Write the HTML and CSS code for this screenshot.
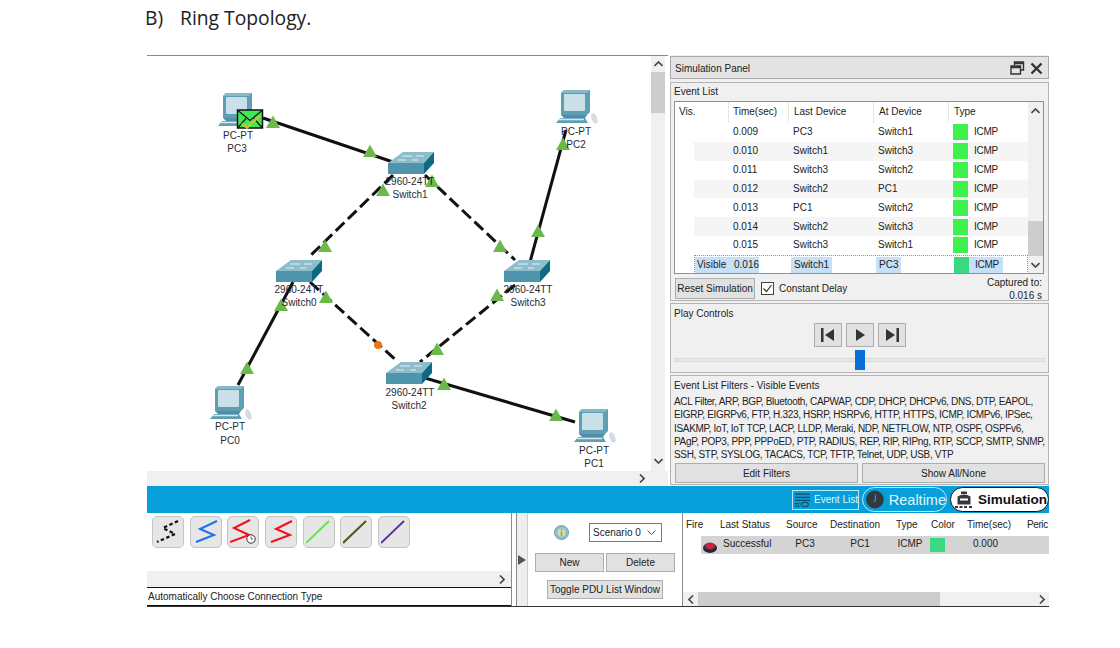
FILE: index.html
```html
<!DOCTYPE html>
<html lang="en">
<head>
<meta charset="utf-8">
<title>Ring Topology</title>
<link rel="stylesheet" href="styles.css">
</head>
<body>
<h1 class="heading"><span class="heading-num">B)</span><span>Ring Topology.</span></h1>
<div class="app">
  <div class="top">
    <section class="workspace">
      <div class="ws-main">
        <svg class="canvas" viewBox="147 56 504 415" width="504" height="415">
          <defs>
            <g id="pc">
              <path d="M1 3L4 0H30V22L27 25H1z" fill="#5f9fb6"/>
              <path d="M1 3L4 0H30L27 3z" fill="#86b8ca"/>
              <rect x="4" y="4" width="21" height="17" rx="1" fill="#c9e0e9"/>
              <path d="M1 25H27L25 28H4z" fill="#4f8ea6"/>
              <path d="M0 28H25L28 33H-4z" fill="#5f9fb6"/>
              <path d="M-1 29.500H24" stroke="#d6e7ee" stroke-width="1.500"/>
              <path d="M33 23q4 1 5 9l-3 2q-4-3-4-9z" fill="#d5dde2"/>
            </g>
            <g id="sw">
              <polygon points="0,11 15,0 46,0 36,11" fill="#8dbccb"/>
              <polygon points="0,11 36,11 36,22 0,22" fill="#4f94ad"/>
              <polygon points="36,11 46,0 46,11 36,22" fill="#0e6a80"/>
              <path d="M14 4h10M28 4h8M10 8h8M24 8h6" stroke="#dff0f5" stroke-width="1"/>
            </g>
            <polygon id="tri" points="0,-6.500 7,6 -7,6" fill="#6cb94b"/>
          </defs>
          <g class="link">
            <path d="M263 118L393 162"/>
            <path d="M566 130L530 262"/>
            <path d="M293 282L238 385"/>
            <path d="M425 378L575 422"/>
          </g>
          <g class="link dash">
            <path d="M393 175L308 258"/>
            <path d="M425 175L515 260"/>
            <path d="M310 282L398 362"/>
            <path d="M515 285L420 362"/>
          </g>
          <use href="#pc" x="222" y="93"/>
          <use href="#pc" x="560" y="90"/>
          <use href="#pc" x="214" y="386"/>
          <use href="#pc" x="578" y="409"/>
          <use href="#sw" x="388" y="152"/>
          <use href="#sw" x="276" y="260"/>
          <use href="#sw" x="504" y="260"/>
          <use href="#sw" x="386" y="362"/>
          <g>
            <rect x="237.500" y="110" width="25" height="18" fill="#3fe857" stroke="#111" stroke-width="1.500"/>
            <path d="M238 110.500l12 10 12-10M238 127.500l8-9M262 127.500l-8-9" fill="none" stroke="#111" stroke-width="1.200"/>
            <path d="M242 123.500l5 4 13-12" fill="none" stroke="#c4c43a" stroke-width="2.600"/>
          </g>
          <g>
            <use href="#tri" x="273" y="122"/>
            <use href="#tri" x="370" y="151"/>
            <use href="#tri" x="383" y="190"/>
            <use href="#tri" x="325" y="246"/>
            <use href="#tri" x="432" y="181"/>
            <use href="#tri" x="500" y="246"/>
            <use href="#tri" x="563" y="144"/>
            <use href="#tri" x="538" y="231"/>
            <use href="#tri" x="497" y="295"/>
            <use href="#tri" x="437" y="349"/>
            <use href="#tri" x="444" y="384"/>
            <use href="#tri" x="556" y="415"/>
            <use href="#tri" x="247" y="368"/>
            <use href="#tri" x="281" y="305"/>
            <use href="#tri" x="326" y="297"/>
          </g>
          <circle cx="378" cy="345" r="4" fill="#f47210"/>
          <g class="node-label">
            <text x="238" y="139">PC-PT</text><text x="237" y="152">PC3</text>
            <text x="576" y="135">PC-PT</text><text x="576" y="148">PC2</text>
            <text x="230" y="430">PC-PT</text><text x="230" y="444">PC0</text>
            <text x="594" y="454">PC-PT</text><text x="594" y="467">PC1</text>
            <text x="410" y="185">2960-24TT</text><text x="410" y="198">Switch1</text>
            <text x="299" y="293">2960-24TT</text><text x="299" y="306">Switch0</text>
            <text x="528" y="293">2960-24TT</text><text x="528" y="306">Switch3</text>
            <text x="410" y="396">2960-24TT</text><text x="409" y="409">Switch2</text>
          </g>
        </svg>
        <div class="vscroll">
          <svg class="chev" width="9" height="6" viewBox="0 0 9 6"><path d="M.5 5l4-4 4 4"/></svg>
          <div class="vthumb"></div>
          <svg class="chev chev-down" width="9" height="6" viewBox="0 0 9 6"><path d="M.5 1l4 4 4-4"/></svg>
        </div>
      </div>
      <div class="hscroll"><svg class="chev" width="6" height="9" viewBox="0 0 6 9"><path d="M1 .5l4 4-4 4"/></svg></div>
    </section>

    <aside class="panel">
      <header class="title">
        <span>Simulation Panel</span>
        <span class="title-icons">
          <svg width="15" height="14" viewBox="0 0 15 14"><path d="M4.500 4V1h9v8h-3M1 5h9.500v8H1zM1 6.500h9.500M4.500 2.500h9" fill="none" stroke="#333" stroke-width="1.400"/></svg>
          <svg width="13" height="13" viewBox="0 0 13 13"><path d="M1.500 1.500l10 10M11.500 1.500l-10 10" stroke="#333" stroke-width="2.400"/></svg>
        </span>
      </header>

      <section class="group group-events">
        <div class="group-label">Event List</div>
        <div class="etable">
          <div class="erows">
            <div class="ehead">
              <span class="h-vis">Vis.</span><span class="h-time">Time(sec)</span><span class="h-last">Last Device</span><span class="h-at">At Device</span><span class="h-type">Type</span>
            </div>
            <div class="erow"><span></span><span>0.009</span><span>PC3</span><span>Switch1</span><i class="swatch"></i><span>ICMP</span></div>
            <div class="erow alt"><span></span><span>0.010</span><span>Switch1</span><span>Switch3</span><i class="swatch"></i><span>ICMP</span></div>
            <div class="erow"><span></span><span>0.011</span><span>Switch3</span><span>Switch2</span><i class="swatch"></i><span>ICMP</span></div>
            <div class="erow alt"><span></span><span>0.012</span><span>Switch2</span><span>PC1</span><i class="swatch"></i><span>ICMP</span></div>
            <div class="erow"><span></span><span>0.013</span><span>PC1</span><span>Switch2</span><i class="swatch"></i><span>ICMP</span></div>
            <div class="erow alt"><span></span><span>0.014</span><span>Switch2</span><span>Switch3</span><i class="swatch"></i><span>ICMP</span></div>
            <div class="erow"><span></span><span>0.015</span><span>Switch3</span><span>Switch1</span><i class="swatch"></i><span>ICMP</span></div>
            <div class="erow selected"><span class="sel-vis">Visible</span><span><b class="sel">0.016</b></span><span><b class="sel sel-pad">Switch1</b></span><span><b class="sel sel-pad">PC3</b></span><i class="swatch swatch-sel"></i><span><b class="sel sel-type">ICMP</b></span></div>
          </div>
          <div class="escroll">
            <div class="ecap"><svg class="chev" width="9" height="6" viewBox="0 0 9 6"><path d="M.5 5l4-4 4 4"/></svg></div>
            <div class="ethumb"></div>
            <div class="ecap"><svg class="chev" width="9" height="6" viewBox="0 0 9 6"><path d="M.5 1l4 4 4-4"/></svg></div>
          </div>
        </div>
        <div class="event-actions">
          <button class="btn btn-reset">Reset Simulation</button>
          <label class="check">
            <svg width="13" height="13" viewBox="0 0 13 13"><rect x="0.500" y="0.500" width="12" height="12" fill="#fff" stroke="#444"/><path d="M2.500 6.500l3 3 5-6.500" fill="none" stroke="#333" stroke-width="1.200"/></svg>
            <span>Constant Delay</span>
          </label>
          <div class="captured"><div>Captured to:</div><div>0.016 s</div></div>
        </div>
      </section>

      <section class="group group-play">
        <div class="group-label">Play Controls</div>
        <div class="play-buttons">
          <button class="pbtn"><svg width="14" height="14" viewBox="0 0 14 14"><path d="M0 0h2.500v14H0zM13 1v12L4 7z" fill="#333"/></svg></button>
          <button class="pbtn"><svg width="14" height="14" viewBox="0 0 14 14"><path d="M3 1v12l9-6z" fill="#333"/></svg></button>
          <button class="pbtn"><svg width="14" height="14" viewBox="0 0 14 14"><path d="M11.500 0H14v14h-2.500zM1 1v12l9-6z" fill="#333"/></svg></button>
        </div>
        <div class="slider"><div class="slider-thumb"></div></div>
      </section>

      <section class="group group-filters">
        <div class="group-label">Event List Filters - Visible Events</div>
        <p class="filters">ACL Filter, ARP, BGP, Bluetooth, CAPWAP, CDP, DHCP, DHCPv6, DNS, DTP, EAPOL,<br>EIGRP, EIGRPv6, FTP, H.323, HSRP, HSRPv6, HTTP, HTTPS, ICMP, ICMPv6, IPSec,<br>ISAKMP, IoT, IoT TCP, LACP, LLDP, Meraki, NDP, NETFLOW, NTP, OSPF, OSPFv6,<br>PAgP, POP3, PPP, PPPoED, PTP, RADIUS, REP, RIP, RIPng, RTP, SCCP, SMTP, SNMP,<br>SSH, STP, SYSLOG, TACACS, TCP, TFTP, Telnet, UDP, USB, VTP</p>
        <div class="filter-buttons">
          <button class="btn btn-wide">Edit Filters</button>
          <button class="btn btn-wide">Show All/None</button>
        </div>
      </section>
    </aside>
  </div>

  <div class="bar">
    <div class="bar-event">
      <svg width="17" height="16" viewBox="0 0 17 16"><path d="M0 1.500h17M0 5h17M0 8.500h17M0 12h5M0 15h5" stroke="#1c4a5e" stroke-width="1.400"/><ellipse cx="11" cy="13" rx="4" ry="2.500" fill="none" stroke="#1c4a5e" stroke-width="1.300"/></svg>
      <span>Event List</span>
    </div>
    <div class="bar-real">
      <svg width="19" height="19" viewBox="0 0 19 19"><circle cx="9.500" cy="9.500" r="9.500" fill="#35393d"/><path d="M10 4.500v6l-2 1.500" fill="none" stroke="#1aa3d8" stroke-width="1.300"/></svg>
      <span>Realtime</span>
    </div>
    <div class="bar-sim">
      <svg width="20" height="20" viewBox="0 0 20 20"><path d="M7 1.500h6v2.500h-6zM3.500 6.500q6.500-4 13 0v8h-13z" fill="#35393d"/><rect x="6" y="8.500" width="8" height="2" fill="#fff"/><path d="M1 17h3M5.500 17h3M10 17h3M15 17h3" stroke="#35393d" stroke-width="2"/></svg>
      <span>Simulation</span>
    </div>
  </div>

  <div class="bottom">
    <section class="tools">
      <div class="tool-row">
        <button class="tool"><svg width="26" height="26" viewBox="0 0 26 26"><path d="M23 2L8 9l12 6L2 23" fill="none" stroke="#111" stroke-width="2.200" stroke-dasharray="3.500 2.500"/></svg></button>
        <button class="tool"><svg width="26" height="26" viewBox="0 0 26 26"><path d="M24 2L7 10l14 6L3 23" fill="none" stroke="#1a73f0" stroke-width="2"/></svg></button>
        <button class="tool"><svg width="26" height="26" viewBox="0 0 26 26"><path d="M20 1L4 9l15 7L0 23" fill="none" stroke="#f2101a" stroke-width="2"/><circle cx="21" cy="20" r="4.200" fill="#fff" stroke="#333"/><path d="M21 17.500v2.500h2" fill="none" stroke="#333" stroke-width="0.800"/></svg></button>
        <button class="tool"><svg width="26" height="26" viewBox="0 0 26 26"><path d="M24 2L8 10l14 6L3 23" fill="none" stroke="#f2101a" stroke-width="2"/></svg></button>
        <button class="tool"><svg width="26" height="26" viewBox="0 0 26 26"><path d="M23 2L0 24" stroke="#5fe83a" stroke-width="1.800"/></svg></button>
        <button class="tool"><svg width="26" height="26" viewBox="0 0 26 26"><path d="M23 2L0 24" stroke="#5a5313" stroke-width="2"/></svg></button>
        <button class="tool"><svg width="26" height="26" viewBox="0 0 26 26"><path d="M23 2L0 24" stroke="#5a2d9a" stroke-width="1.800"/></svg></button>
      </div>
      <div class="tool-scroll"><svg class="chev" width="6" height="9" viewBox="0 0 6 9"><path d="M1 .5l4 4-4 4"/></svg></div>
      <div class="status">Automatically Choose Connection Type</div>
    </section>

    <div class="splitter"><svg width="8" height="10" viewBox="0 0 8 10"><path d="M0 0l8 5-8 5z" fill="#555"/></svg></div>

    <section class="pdu">
      <div class="pdu-top">
        <svg class="info" width="15" height="15" viewBox="0 0 15 15"><circle cx="7.500" cy="7.500" r="7" fill="#8cc0cd" stroke="#6a9dac"/><circle cx="7.500" cy="7.500" r="4" fill="#cfe0b0"/><path d="M7.500 4v1.500M7.500 6.500v4.500" stroke="#b29a14" stroke-width="1.500"/></svg>
        <div class="select"><span>Scenario 0</span><svg width="9" height="5" viewBox="0 0 9 5"><path d="M.5.500l4 4 4-4" fill="none" stroke="#555"/></svg></div>
      </div>
      <div class="pdu-row">
        <button class="btn btn-pdu">New</button>
        <button class="btn btn-pdu">Delete</button>
      </div>
      <button class="btn btn-toggle">Toggle PDU List Window</button>
    </section>

    <section class="ptable">
      <div class="phead"><span>Fire</span><span>Last Status</span><span>Source</span><span>Destination</span><span>Type</span><span>Color</span><span>Time(sec)</span><span class="p-period">Peric</span></div>
      <div class="prow">
        <svg width="14" height="12" viewBox="0 0 14 12"><ellipse cx="7" cy="7" rx="7" ry="5" fill="#1d2b3a"/><ellipse cx="7" cy="5" rx="5" ry="3.500" fill="#c4243e"/></svg>
        <span class="p-status">Successful</span><span>PC3</span><span>PC1</span><span>ICMP</span><i class="p-swatch"></i><span class="p-time">0.000</span>
      </div>
      <div class="pfill"></div>
      <div class="pscroll">
        <div class="pcap"><svg class="chev" width="6" height="9" viewBox="0 0 6 9"><path d="M5 .5l-4 4 4 4"/></svg></div>
        <div class="pthumb"></div>
        <div class="pcap pcap-end"><svg class="chev" width="6" height="9" viewBox="0 0 6 9"><path d="M1 .5l4 4-4 4"/></svg></div>
      </div>
    </section>
  </div>
</div>
</body>
</html>
```
FILE: styles.css
```css
* { box-sizing: border-box; }
html, body { margin: 0; padding: 0; background: #fff; }
body { width: 1120px; height: 648px; overflow: hidden; font: 10px "Liberation Sans", Arial, sans-serif; color: #222; }
button { font: inherit; color: inherit; margin: 0; padding: 0; }
.chev { display: block; flex: none; fill: none; stroke: #444; stroke-width: 1.600; }

.heading { margin: 0; height: 55px; padding: 6px 0 0 145px; font: 400 19.300px/24px "Open Sans", sans-serif; color: #222; display: flex; }
.heading-num { width: 35px; }

.app { margin-left: 147px; width: 902px; }
.top { display: flex; height: 431px; }

.workspace { width: 521px; border-top: 1px solid #8a8a8a; display: flex; flex-direction: column; }
.ws-main { display: flex; height: 415px; }
.canvas { display: block; flex: none; background: #fff; }
.link path { fill: none; stroke: #111; stroke-width: 3; }
.link.dash path { stroke-dasharray: 12 5; }
.node-label text { font: 10px "Liberation Sans", Arial, sans-serif; fill: #1f2a35; text-anchor: middle; }

.vscroll { width: 14px; background: #f0f0f0; display: flex; flex-direction: column; align-items: center; padding-top: 5px; }
.vthumb { width: 14px; height: 41px; background: #cdcdcd; margin-top: 5px; }
.chev-down { margin: auto 0 7px; }
.hscroll { height: 15px; width: 521px; background: #f0f0f0; display: flex; justify-content: flex-end; align-items: center; padding-right: 23px; }

.panel { width: 379px; margin-left: 2px; background: #f0f0f0; padding-top: 1px; display: flex; flex-direction: column; }
.title { height: 23px; background: #e3e3e3; border: 1px solid #a8a8a8; display: flex; align-items: center; justify-content: space-between; padding: 1px 5px 0 4px; font-size: 10px; }
.title-icons { display: flex; gap: 5px; align-items: center; }
.group { border: 1px solid #b4b4b4; padding: 0 3px; }
.group-label { font-size: 10px; line-height: 12px; }
.group-events { height: 219px; margin-top: 3px; padding-top: 3px; }
.etable { display: flex; margin-top: 3px; height: 173px; width: 370px; border: 1px solid #8f8f8f; background: #fff; }
.erows { flex: 1; }
.ehead { height: 21px; display: flex; background: #fff; line-height: 19px; padding-left: 4px; }
.ehead span { border-right: 1px solid #e6e6e6; }
.h-vis { width: 50px; }
.h-time { width: 60px; padding-left: 4px; }
.h-last { width: 85px; padding-left: 5px; }
.h-at { width: 75px; padding-left: 5px; }
.ehead .h-type { border: 0; padding-left: 5px; }
.erow { margin-left: 19px; height: 18.850px; display: grid; grid-template-columns: 39px 60px 85px 75px 15px 1fr; align-items: center; line-height: 18px; }
.erow.alt { background: #f5f5f5; }
.swatch { display: block; width: 15px; height: 16px; background: #3df24c; }
.erow span:last-child { padding-left: 6px; letter-spacing: -0.300px; }
.selected { border: 1px dotted #e07f1f; }
.sel-vis { padding-left: 2px; background: #c6e0f8; height: 16px; line-height: 16px; }
.sel { font-weight: 400; display: inline-block; background: #c6e0f8; height: 16px; line-height: 16px; }
.sel-pad { padding: 0 3px; margin-left: -3px; }
.sel-type { margin-left: -6px; padding: 0 4px 0 6px; }
.swatch-sel { background: #3bd884; }
.escroll { width: 15px; background: #f0f0f0; display: flex; flex-direction: column; align-items: center; }
.ecap { height: 17px; display: flex; align-items: center; justify-content: center; }
.ethumb { width: 15px; height: 35px; background: #cdcdcd; margin-top: auto; }
.event-actions { display: flex; align-items: flex-start; padding: 4px 0 0 1px; }
.btn { background: #e1e1e1; border: 1px solid #adadad; font-size: 10px; }
.btn-reset { width: 80px; height: 21px; }
.check { display: flex; align-items: center; gap: 5px; margin: 4px 0 0 6px; }
.captured { margin-left: auto; margin-top: -2px; text-align: right; padding-right: 3px; line-height: 13px; }

.group-play { height: 70px; margin-top: 2px; padding-top: 4px; }
.play-buttons { display: flex; gap: 4px; justify-content: center; margin-top: 3px; padding-left: 1px; }
.pbtn { width: 28px; height: 24px; background: #e1e1e1; border: 1px solid #adadad; display: flex; align-items: center; justify-content: center; }
.slider { position: relative; height: 4px; background: #e6e6e6; border: 1px solid #dadada; margin-top: 11px; }
.slider-thumb { position: absolute; left: 180px; top: -9px; width: 10px; height: 20px; background: #0b6fd8; }

.group-filters { height: 110px; margin-top: 2px; padding-top: 4px; }
.filters { margin: 3px 0 0; font-size: 10px; line-height: 13.300px; white-space: nowrap; letter-spacing: -0.320px; }
.filter-buttons { display: flex; gap: 4px; padding: 2px 0 0 1px; }
.btn-wide { width: 183px; height: 20px; }

.bar { height: 27px; background: #069fd9; display: flex; align-items: center; justify-content: flex-end; }
.bar-event { width: 67px; height: 20px; border: 1px solid #bfe6f5; display: flex; align-items: center; gap: 4px; padding-left: 2px; color: #e2f4fb; font-size: 10px; white-space: nowrap; }
.bar-real { width: 85px; height: 25px; margin-left: 3px; border: 1px solid #bfe6f5; border-radius: 13px; display: flex; align-items: center; gap: 5px; padding-left: 3px; color: #e2f4fb; font-size: 14.500px; }
.bar-sim { width: 99px; height: 25px; margin-left: 3px; background: #fff; border: 1px solid #111; border-radius: 13px; display: flex; align-items: center; gap: 4px; padding-left: 3px; font-size: 13.500px; font-weight: 700; color: #111; }

.bottom { height: 94px; display: flex; border-bottom: 1px solid #333; }
.tools { width: 365px; border-right: 1px solid #8a8a8a; display: flex; flex-direction: column; }
.tool-row { height: 59px; display: flex; gap: 5.700px; padding: 3px 0 0 5px; }
.tool { width: 32px; height: 32px; border: 1px solid #c4c4c4; border-radius: 5px; background: #e6e6e6; display: flex; align-items: center; justify-content: center; }
.tool-scroll { height: 16px; background: #f0f0f0; display: flex; justify-content: flex-end; align-items: center; padding-right: 6px; }
.status { flex: 1; border-top: 1px solid #111; border-bottom: 1px solid #111; line-height: 17px; padding-left: 1px; }
.splitter { width: 12px; margin-left: 4px; border-left: 1px solid #8a8a8a; border-right: 1px solid #ccc; background: #eee; display: flex; align-items: center; padding-left: 1px; }

.pdu { width: 154px; display: flex; flex-direction: column; background: #fff; padding: 10px 0 0 7px; }
.pdu-top { display: flex; align-items: center; height: 19px; }
.info { margin-left: 19px; }
.select { width: 73px; height: 19px; margin-left: 20px; border: 1px solid #7a7a7a; background: #fff; display: flex; align-items: center; justify-content: space-between; padding: 0 5px 0 3px; }
.pdu-row { display: flex; gap: 2px; margin-top: 11px; }
.btn-pdu { width: 69px; height: 19px; }
.btn-toggle { width: 116px; height: 19px; margin: 8px 0 0 12px; }

.ptable { flex: 1; border-left: 1px solid #8a8a8a; display: flex; flex-direction: column; overflow: hidden; min-width: 0; }
.phead { height: 23px; display: grid; grid-template-columns: 34px 66px 44px 66px 35px 36px 60px 22px; line-height: 23px; padding-left: 3px; white-space: nowrap; overflow: hidden; }
.p-period { letter-spacing: -0.400px; }
.prow { height: 18px; margin-left: 18px; background: #d4d4d4; display: grid; grid-template-columns: 19px 60px 50px 60px 40px 15px 81px; align-items: center; }
.prow svg { margin: 3px 0 0 2px; }
.prow span { margin-top: -4px; text-align: center; }
.prow .p-status { text-align: left; padding-left: 3px; }
.p-swatch { display: block; width: 15px; height: 14px; background: #3bd884; }
.pfill { flex: 1; }
.pscroll { height: 14px; background: #f0f0f0; display: flex; align-items: center; }
.pcap { width: 15px; display: flex; justify-content: center; }
.pthumb { width: 242px; height: 14px; background: #cdcdcd; }
.pcap-end { margin-left: auto; }
```
